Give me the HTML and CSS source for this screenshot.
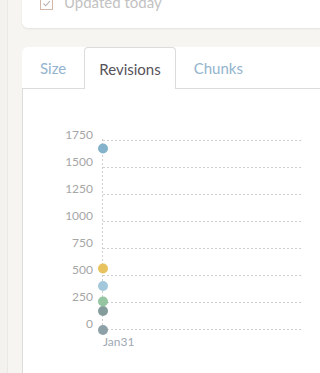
FILE: index.html
```html
<!DOCTYPE html>
<html>
<head>
<meta charset="utf-8">
<link rel="stylesheet" href="styles.css">
</head>
<body>
<div class="page">
  <div class="rail"></div>
  <div class="main">
    <div class="card">
      <div class="meta-row">
        <svg class="meta-icon" width="13" height="13" viewBox="0 0 13 13">
          <rect x="0.5" y="0.5" width="12" height="12" fill="none" stroke="#d2b8a8" stroke-width="1"/>
          <path d="M3.5 6.5 L5.8 8.8 L9.8 4.2" fill="none" stroke="#b9b3b0" stroke-width="1.1"/>
        </svg>
        <span class="meta-text">Updated today</span>
      </div>
    </div>
    <div class="tabs-box">
      <div class="tab-bar">
        <div class="tab">Size</div>
        <div class="tab active">Revisions</div>
        <div class="tab">Chunks</div>
        <div class="tab-fill"></div>
      </div>
      <div class="panel">
        <svg class="chart" width="278" height="283" viewBox="0 0 278 283">
          <g class="grid" stroke="#cfcfcf" stroke-width="1" stroke-dasharray="2 2">
            <line x1="80" y1="51.5" x2="278" y2="51.5"/>
            <line x1="80" y1="78.5" x2="278" y2="78.5"/>
            <line x1="80" y1="105.5" x2="278" y2="105.5"/>
            <line x1="80" y1="132.5" x2="278" y2="132.5"/>
            <line x1="80" y1="159.5" x2="278" y2="159.5"/>
            <line x1="80" y1="186.5" x2="278" y2="186.5"/>
            <line x1="80" y1="213.5" x2="278" y2="213.5"/>
            <line x1="80" y1="240.5" x2="278" y2="240.5"/>
            <line x1="79.5" y1="50" x2="79.5" y2="242"/>
          </g>
          <g class="ylabels">
            <text x="70" y="46.5">1750</text>
            <text x="70" y="73.5">1500</text>
            <text x="70" y="100.5">1250</text>
            <text x="70" y="127.5">1000</text>
            <text x="70" y="154.5">750</text>
            <text x="70" y="181.5">500</text>
            <text x="70" y="208.5">250</text>
            <text x="70" y="236">0</text>
          </g>
          <g class="points">
            <circle cx="80" cy="59.5" r="5" fill="#7eafc8"/>
            <circle cx="80" cy="179.5" r="5" fill="#e6bf55"/>
            <circle cx="80" cy="197" r="5" fill="#9ec4d9"/>
            <circle cx="80" cy="222" r="5" fill="#7d9796"/>
            <circle cx="80" cy="212.5" r="5" fill="#8fc39c"/>
            <circle cx="80" cy="241" r="5" fill="#879ca4"/>
          </g>
          <text class="xlabel" x="80" y="254">Jan31</text>
        </svg>
      </div>
    </div>
  </div>
</div>
</body>
</html>
```
FILE: styles.css
```css
html, body {
  margin: 0;
  padding: 0;
  height: 100%;
  overflow: hidden;
}
body {
  background: #f6f5f1;
  font-family: Lato, "Open Sans", sans-serif;
}
.page {
  display: flex;
  height: 373px;
}
.rail {
  width: 7px;
  flex: none;
  background: #f3f2ee;
  border-right: 1px solid #ebe9e3;
}
.main {
  flex: 1;
  padding-left: 14px;
  display: flex;
  flex-direction: column;
  gap: 19px;
  min-width: 0;
}
.card {
  background: #fff;
  margin-top: -9px;
  padding: 0 0 15px 18px;
  border-radius: 0 0 0 6px;
  box-shadow: 0 1px 2px rgba(0,0,0,0.08);
}
.meta-row {
  display: flex;
  align-items: center;
  gap: 11px;
  height: 22px;
}
.meta-icon {
  flex: none;
  margin-top: 2px;
}
.meta-text {
  font-size: 15px;
  line-height: 22px;
  color: #c2c2c2;
}
.tabs-box {
  flex: 1;
  display: flex;
  flex-direction: column;
  background: #fff;
  border-radius: 6px 0 0 0;
}
.tab-bar {
  display: flex;
  height: 41px;
  border-bottom: 1px solid #dcdcdc;
}
.tab {
  display: flex;
  align-items: center;
  padding: 0 18px;
  font-size: 15px;
  color: #93b4cd;
}
.tab.active {
  padding: 0 14px;
  color: #56525a;
  background: #fff;
  border: 1px solid #dcdcdc;
  border-bottom: none;
  border-radius: 4px 4px 0 0;
  margin-bottom: -1px;
}
.tab-fill {
  flex: 1;
}
.panel {
  flex: 1;
  border-left: 1px solid #dcdcdc;
}
.chart {
  display: block;
}
.ylabels text {
  font-family: Lato, sans-serif;
  font-size: 12px;
  fill: #a6a6a6;
  text-anchor: end;
  dominant-baseline: middle;
}
.points circle {
  fill-opacity: 0.95;
}
.xlabel {
  font-family: Lato, sans-serif;
  font-size: 12px;
  fill: #a0a9b3;
  dominant-baseline: middle;
}
```
